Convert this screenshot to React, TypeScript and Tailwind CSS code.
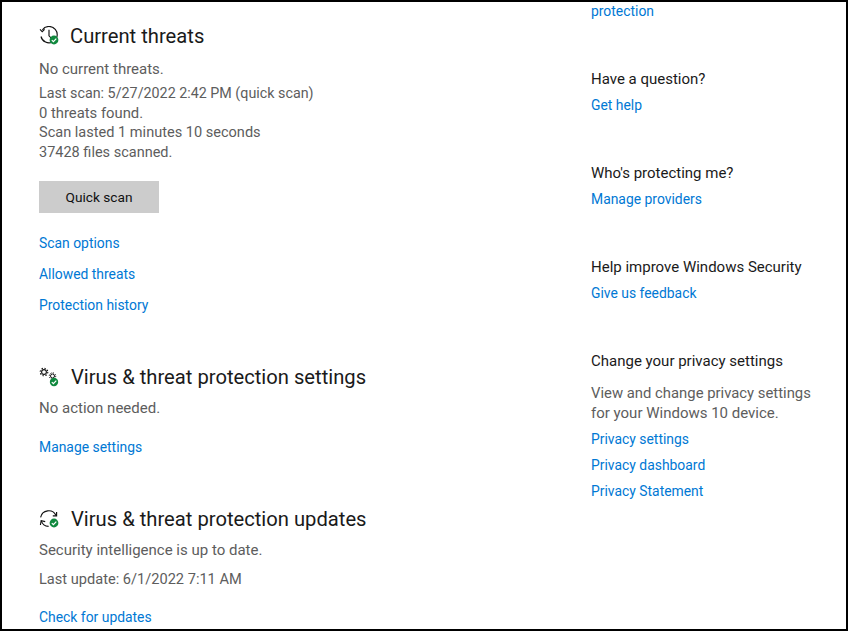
import React from 'react';

const Badge = ({ cx, cy, r = 4.4 }: { cx: number; cy: number; r?: number }) => (
  <g>
    <circle cx={cx} cy={cy} r={r} fill="#10893e" stroke="none" />
    <path d={`M${cx - 2.2} ${cy + 0.1}l1.6 1.6 2.9-3.1`} fill="none" stroke="#fff" strokeWidth="1.2" />
  </g>
);

const HistoryIcon = () => (
  <svg width="20" height="20" viewBox="0 0 20 20" fill="none" stroke="#111" strokeWidth="1.15">
    <path d="M3.4 3.8A8.2 8.2 0 1 1 2 10.5" />
    <path d="M1 3.4 3.2 5.6 5.6 3.4" />
    <path d="M10 3.8v6l3 3" />
    <Badge cx={15} cy={14} />
  </svg>
);

const GearsIcon = () => (
  <svg width="20" height="20" viewBox="0 0 20 20" fill="none" stroke="#111">
    <circle cx="5" cy="5" r="2.4" strokeWidth="1.1" />
    <circle cx="5" cy="5" r="3.8" strokeWidth="1.1" strokeDasharray="1.4 1.58" />
    <circle cx="13.5" cy="9" r="2" strokeWidth="1" />
    <circle cx="13.5" cy="9" r="3.2" strokeWidth="1" strokeDasharray="1.2 1.31" />
    <Badge cx={15} cy={15} r={4.2} />
  </svg>
);

const SyncIcon = () => (
  <svg width="20" height="20" viewBox="0 0 20 20" fill="none" stroke="#111" strokeWidth="1.15">
    <path d="M1.6 8.4A8.2 8.2 0 0 1 17 6.4" />
    <path d="M17.6 3v3.8h-3.8" />
    <path d="M2.2 11.6A8.2 8.2 0 0 0 9.6 17.4" />
    <path d="M1.4 16l.8-4.4 4 1" />
    <Badge cx={15} cy={14} />
  </svg>
);

const Body = ({ className = '', children }: { className?: string; children: React.ReactNode }) => (
  <p className={`leading-[20px] text-[#5d5d5d] whitespace-nowrap ${className}`}>{children}</p>
);

const Link = ({ className = '', children }: { className?: string; children: React.ReactNode }) => (
  <a className={`block text-[13.9px] leading-[20px] text-[#0078d4] whitespace-nowrap ${className}`}>{children}</a>
);

const SideHeading = ({ className = '', children }: { className?: string; children: React.ReactNode }) => (
  <h3 className={`text-[15px] leading-[20px] text-[#1a1a1a] font-normal whitespace-nowrap ${className}`}>{children}</h3>
);

const SectionTitle = ({ icon, gap, children, className = '' }: { icon: React.ReactNode; gap: string; children: React.ReactNode; className?: string }) => (
  <div className={`flex items-center h-[28px] ${gap} ${className}`}>
    {icon}
    <h2 className="text-[20.2px] leading-[28px] text-[#1a1a1a] font-normal whitespace-nowrap">{children}</h2>
  </div>
);

export default function App() {
  return (
    <div className="w-[848px] h-[631px] border-2 border-black bg-white overflow-hidden flex font-['Roboto','Noto_Sans',sans-serif]">
      <div className="w-[550px] shrink-0 pl-[37px] pt-[20px]">
        <SectionTitle icon={<HistoryIcon />} gap="gap-[11px]">Current threats</SectionTitle>
        <Body className="mt-[9px] text-[15px]">No current threats.</Body>
        <Body className="mt-[4px] text-[14.3px]">Last scan: 5/27/2022 2:42 PM (quick scan)</Body>
        <Body className="text-[14.8px]">0 threats found.</Body>
        <Body className="text-[14.55px]">Scan lasted 1 minutes 10 seconds</Body>
        <Body className="text-[14.5px]">37428 files scanned.</Body>
        <button className="mt-[18px] block w-[120px] h-[32px] bg-[#cccccc] text-[13.7px] leading-[20px] text-[#111]">Quick scan</button>
        <Link className="mt-[20px]">Scan options</Link>
        <Link className="mt-[11px]">Allowed threats</Link>
        <Link className="mt-[11px]">Protection history</Link>

        <SectionTitle icon={<GearsIcon />} gap="gap-[12px]" className="mt-[48px]">Virus &amp; threat protection settings</SectionTitle>
        <Body className="mt-[7px] text-[15px]">No action needed.</Body>
        <Link className="mt-[19px]">Manage settings</Link>

        <SectionTitle icon={<SyncIcon />} gap="gap-[12px]" className="mt-[48px]">Virus &amp; threat protection updates</SectionTitle>
        <Body className="mt-[7px] text-[15px]">Security intelligence is up to date.</Body>
        <Body className="mt-[9px] text-[14.6px]">Last update: 6/1/2022 7:11 AM</Body>
        <Link className="mt-[18px]">Check for updates</Link>
      </div>

      <div className="flex-1 pl-[39px] -mt-px">
        <Link>protection</Link>
        <SideHeading className="mt-[48px]">Have a question?</SideHeading>
        <Link className="mt-[6px]">Get help</Link>
        <SideHeading className="mt-[48px]">Who's protecting me?</SideHeading>
        <Link className="mt-[6px]">Manage providers</Link>
        <SideHeading className="mt-[48px]">Help improve Windows Security</SideHeading>
        <Link className="mt-[6px]">Give us feedback</Link>
        <SideHeading className="mt-[48px]">Change your privacy settings</SideHeading>
        <Body className="mt-[12px] text-[14.85px]">View and change privacy settings</Body>
        <Body className="text-[15px]">for your Windows 10 device.</Body>
        <Link className="mt-[6px]">Privacy settings</Link>
        <Link className="mt-[6px]">Privacy dashboard</Link>
        <Link className="mt-[6px]">Privacy Statement</Link>
      </div>
    </div>
  );
}
